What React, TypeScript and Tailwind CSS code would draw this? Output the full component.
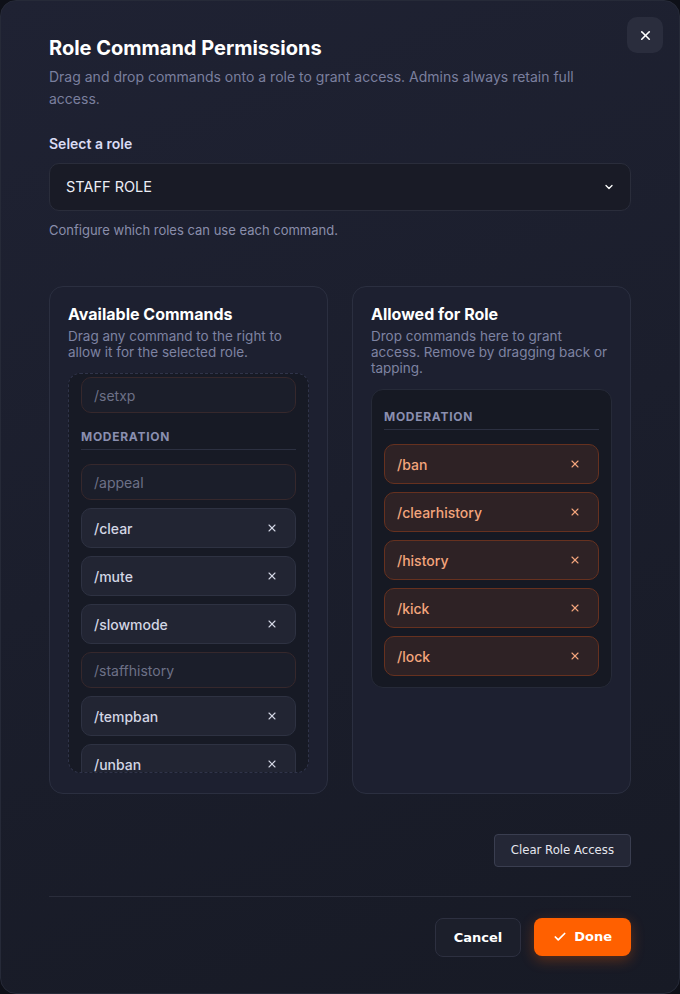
import React from "react";
import { X, ChevronDown, Check } from "lucide-react";

type Cmd = { name: string; on: boolean };

const available: (Cmd | { group: string })[] = [
  { name: "/setxp", on: false },
  { group: "MODERATION" },
  { name: "/appeal", on: false },
  { name: "/clear", on: true },
  { name: "/mute", on: true },
  { name: "/slowmode", on: true },
  { name: "/staffhistory", on: false },
  { name: "/tempban", on: true },
  { name: "/unban", on: true },
];

const allowed = ["/ban", "/clearhistory", "/history", "/kick", "/lock"];

function GroupHeader({ label }: { label: string }) {
  return (
    <div className="border-b border-[#2c3041] pb-[4px] text-[12px] font-bold leading-4 tracking-[0.06em] text-[#8a8fb0]">
      {label}
    </div>
  );
}

function AvailItem({ cmd }: { cmd: Cmd }) {
  if (!cmd.on) {
    return (
      <div className="flex h-9 shrink-0 items-center rounded-[10px] border border-[#36282c] bg-[#1b1e2a] px-[12px] text-[14px] text-[#6d7187]">
        {cmd.name}
      </div>
    );
  }
  return (
    <div className="flex h-10 shrink-0 items-center justify-between rounded-[10px] border border-[#2e3242] bg-[#222533] pl-[12px] pr-[17px] text-[14px] font-medium text-[#d3d6e4]">
      <span>{cmd.name}</span>
      <X size={12} strokeWidth={2.2} className="text-[#d3d6e4]" />
    </div>
  );
}

export default function App() {
  return (
    <div className="min-h-screen bg-[#0e1018] font-['Inter',sans-serif]">
      <div className="relative flex h-[994px] flex-col rounded-[16px] border border-[#262a38] bg-[linear-gradient(160deg,#1f2233_0%,#1b1e2c_50%,#171a25_100%)] px-[48px] pt-[33px]">
        <button className="absolute right-[16px] top-[16px] flex h-9 w-9 items-center justify-center rounded-[10px] bg-[#2a2d3d] text-white">
          <X size={15} strokeWidth={2.6} />
        </button>

        <h1 className="text-[20px] font-bold leading-7 text-white">Role Command Permissions</h1>
        <p className="mt-[4px] pr-[20px] text-[14px] leading-[22px] text-[#7a7f9e]">
          Drag and drop commands onto a role to grant access. Admins always retain full access.
        </p>

        <label className="mt-[24px] text-[14px] font-semibold leading-5 text-[#d9dbf4]">Select a role</label>
        <div className="mt-[9px] flex h-12 items-center justify-between rounded-[10px] border border-[#2a2d3b] bg-[#191b26] pl-[16px] pr-[15px]">
          <span className="text-[14.5px] text-[#eceef5]">STAFF ROLE</span>
          <ChevronDown size={12} strokeWidth={2.6} className="text-white" />
        </div>
        <p className="mt-[10px] text-[13px] leading-[18px] text-[#8a8eab]">Configure which roles can use each command.</p>

        <div className="mt-[47px] grid grid-cols-2 gap-[24px]">
          <div className="rounded-[14px] border border-[#2b2f40] bg-[#1d2030] px-[18px] pb-[20px] pt-[15px]">
            <h2 className="text-[16px] font-bold leading-6 text-white">Available Commands</h2>
            <p className="mt-[2px] text-[13.5px] leading-4 text-[#7e83a2]">
              Drag any command to the right to allow it for the selected role.
            </p>
            <div className="mt-[13px] h-[400px] overflow-hidden rounded-[12px] border border-dashed border-[#30344a] bg-[#171a25] px-[12px] pt-[3px]">
              <div className="flex flex-col gap-2">
                {available.map((it, i) =>
                  "group" in it ? (
                    <div key={i} className="mt-[8px] pb-[6px]">
                      <GroupHeader label={it.group} />
                    </div>
                  ) : (
                    <AvailItem key={i} cmd={it} />
                  )
                )}
              </div>
            </div>
          </div>

          <div className="rounded-[14px] border border-[#2b2f40] bg-[#1d2030] px-[18px] pb-[20px] pt-[15px]">
            <h2 className="text-[16px] font-bold leading-6 text-white">Allowed for Role</h2>
            <p className="mt-[2px] text-[13.5px] leading-4 text-[#7e83a2]">
              Drop commands here to grant access. Remove by dragging back or tapping.
            </p>
            <div className="mt-[13px] rounded-[12px] border border-[#262a38] bg-[#161923] px-[12px] pb-[11px] pt-[19px]">
              <GroupHeader label="MODERATION" />
              <div className="mt-[14px] flex flex-col gap-2">
                {allowed.map((c) => (
                  <div
                    key={c}
                    className="flex h-10 items-center justify-between rounded-[10px] border border-[#66311f] bg-[#2e2225] pl-[12px] pr-[17px] text-[14px] font-medium text-[#f3a57c]"
                  >
                    <span>{c}</span>
                    <X size={12} strokeWidth={2.2} />
                  </div>
                ))}
              </div>
            </div>
          </div>
        </div>

        <div className="mt-[40px] flex justify-end">
          <button className="h-[33px] rounded-[4px] border border-[#3a3e50] bg-[#242736] px-[16px] font-['DejaVu_Sans',sans-serif] text-[11.7px] text-[#e4e6ee]">
            Clear Role Access
          </button>
        </div>

        <div className="mt-[29px] border-t border-[#2a2d3b]" />

        <div className="mt-[21px] flex justify-end gap-[13px]">
          <button className="h-[39px] rounded-[8px] border border-[#2d3040] bg-[#1c1f2b] px-[18px] font-['DejaVu_Sans',sans-serif] text-[13px] font-bold text-white">
            Cancel
          </button>
          <button className="flex h-[38px] items-center gap-[7px] rounded-[8px] bg-[#ff6000] px-[19px] font-['DejaVu_Sans',sans-serif] text-[13px] font-bold text-white shadow-[0_4px_14px_rgba(255,96,0,0.3)]">
            <Check size={14} strokeWidth={3} />
            Done
          </button>
        </div>
      </div>
    </div>
  );
}
